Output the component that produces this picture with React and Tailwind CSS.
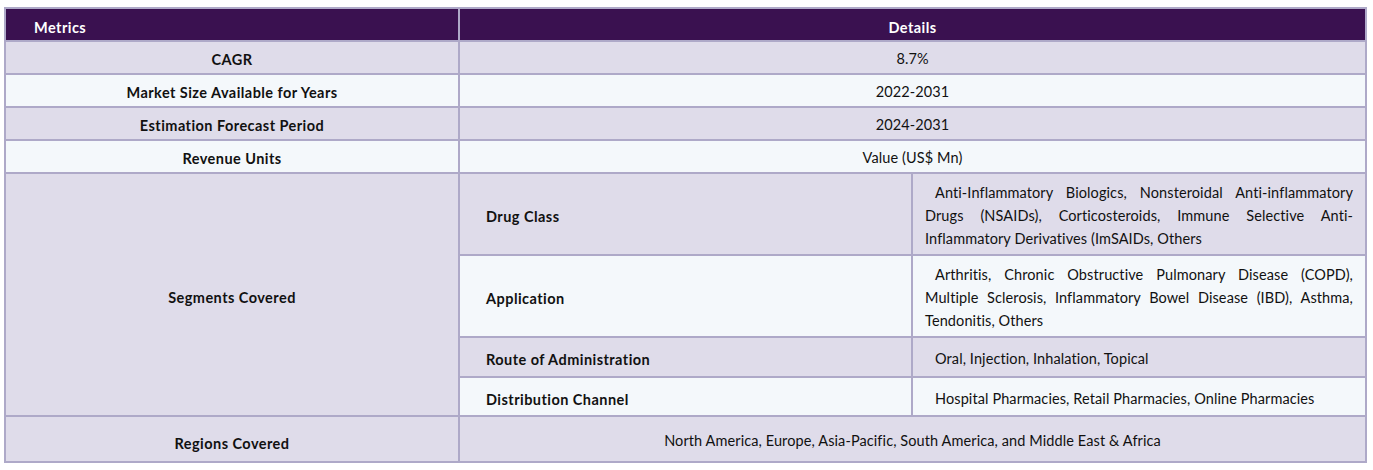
const rows = [
  { label: 'CAGR', value: '8.7%', bg: 'bg-[#dfdcea]' },
  { label: 'Market Size Available for Years', value: '2022-2031', bg: 'bg-[#f4f8fb]' },
  { label: 'Estimation Forecast Period', value: '2024-2031', bg: 'bg-[#dfdcea]' },
  { label: 'Revenue Units', value: 'Value (US$ Mn)', bg: 'bg-[#f4f8fb]' },
]

const segments = [
  {
    name: 'Drug Class',
    text: 'Anti-Inflammatory Biologics, Nonsteroidal Anti-inflammatory Drugs (NSAIDs), Corticosteroids, Immune Selective Anti-Inflammatory Derivatives (ImSAIDs, Others',
    bg: 'bg-[#dfdcea]',
    h: 'h-[82px]',
  },
  {
    name: 'Application',
    text: 'Arthritis, Chronic Obstructive Pulmonary Disease (COPD), Multiple Sclerosis, Inflammatory Bowel Disease (IBD), Asthma, Tendonitis, Others',
    bg: 'bg-[#f4f8fb]',
    h: 'h-[82px]',
  },
  {
    name: 'Route of Administration',
    text: 'Oral, Injection, Inhalation, Topical',
    bg: 'bg-[#dfdcea]',
    h: 'h-[40px]',
  },
  {
    name: 'Distribution Channel',
    text: 'Hospital Pharmacies, Retail Pharmacies, Online Pharmacies',
    bg: 'bg-[#f4f8fb]',
    h: 'h-[39px]',
  },
]

const cell = 'border-2 border-[#aea9c8]'
const bold = 'font-bold tracking-[0.45px]'

export default function App() {
  return (
    <div className="w-[1373px] h-[470px] bg-white pl-[4px] pt-[7px] font-['Lato',sans-serif] text-[14.5px] tracking-[0.1px] text-[#111]">
      <table className="w-[1361px] border-collapse table-fixed">
        <colgroup>
          <col className="w-[454px]" />
          <col className="w-[453px]" />
          <col className="w-[454px]" />
        </colgroup>
        <tbody>
          <tr className="bg-[#3a1150] text-white h-[33px]">
            <td className={`${cell} ${bold} pl-[28px] pt-[6px]`}>Metrics</td>
            <td className={`${cell} ${bold} text-center pt-[6px]`} colSpan={2}>
              Details
            </td>
          </tr>

          {rows.map((r) => (
            <tr key={r.label} className={`${r.bg} h-[33px]`}>
              <td className={`${cell} ${bold} text-center pt-[5px]`}>{r.label}</td>
              <td className={`${cell} text-center pt-[3px]`} colSpan={2}>
                {r.value}
              </td>
            </tr>
          ))}

          {segments.map((s, i) => (
            <tr key={s.name} className={`${s.bg} ${s.h}`}>
              {i === 0 && (
                <td className={`${cell} ${bold} bg-[#dfdcea] text-center pt-[6px]`} rowSpan={4}>
                  Segments Covered
                </td>
              )}
              <td className={`${cell} ${bold} pl-[26px] pt-[6px]`}>{s.name}</td>
              <td className={`${cell} pl-[12px] pr-[12px] pt-[6px] pb-[3px] leading-[23px] text-justify indent-[10px]`}>
                {s.text}
              </td>
            </tr>
          ))}

          <tr className="bg-[#dfdcea] h-[46px]">
            <td className={`${cell} ${bold} text-center pt-[9px]`}>Regions Covered</td>
            <td className={`${cell} text-center pt-[4px]`} colSpan={2}>
              North America, Europe, Asia-Pacific, South America, and Middle East &amp; Africa
            </td>
          </tr>
        </tbody>
      </table>
    </div>
  )
}
